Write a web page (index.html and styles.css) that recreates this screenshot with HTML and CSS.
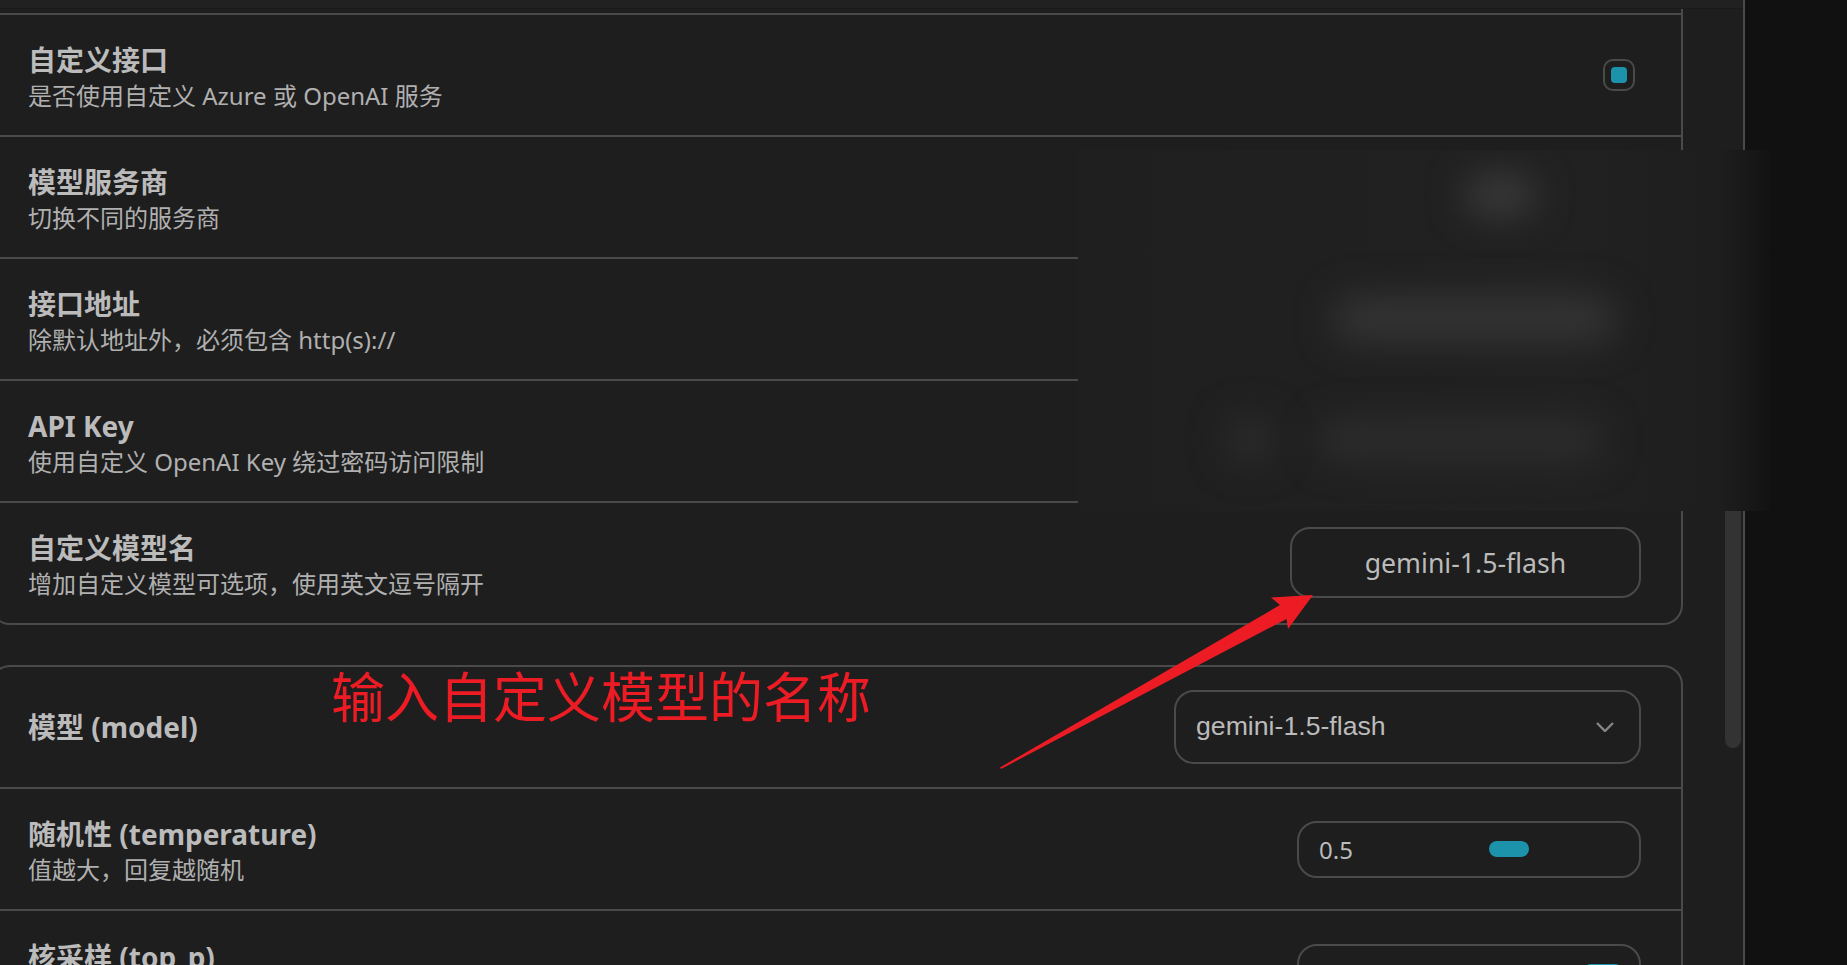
FILE: index.html
```html
<!DOCTYPE html>
<html lang="zh-CN">
<head>
<meta charset="utf-8">
<title>设置</title>
<link rel="stylesheet" href="styles.css">
</head>
<body>
<div class="panel">
  <div class="topbar"></div>
  <div class="scroller">
    <section class="card card--scrolled">
      <div class="row row--clipped"></div>
      <div class="row">
        <div class="label"><div class="title">自定义接口</div><div class="sub">是否使用自定义 Azure 或 OpenAI 服务</div></div>
        <div class="checkbox"><span class="checkbox-mark"></span></div>
      </div>
      <div class="row">
        <div class="label"><div class="title">模型服务商</div><div class="sub">切换不同的服务商</div></div>
      </div>
      <div class="row">
        <div class="label"><div class="title">接口地址</div><div class="sub">除默认地址外，必须包含 http(s)://</div></div>
      </div>
      <div class="row">
        <div class="label"><div class="title">API Key</div><div class="sub">使用自定义 OpenAI Key 绕过密码访问限制</div></div>
      </div>
      <div class="row row--last">
        <div class="label"><div class="title">自定义模型名</div><div class="sub">增加自定义模型可选项，使用英文逗号隔开</div></div>
        <div class="text-input">gemini-1.5-flash</div>
      </div>
    </section>
    <section class="card">
      <div class="row">
        <div class="label label--single"><div class="title">模型 (model)</div></div>
        <div class="select">
          <span>gemini-1.5-flash</span>
          <svg class="chevron" viewBox="0 0 18 10" width="18" height="10"><path d="M1 1l8 8 8-8" fill="none" stroke="#858585" stroke-width="2.4"/></svg>
        </div>
      </div>
      <div class="row">
        <div class="label"><div class="title">随机性 (temperature)</div><div class="sub">值越大，回复越随机</div></div>
        <div class="range"><span class="range-value">0.5</span><span class="range-track"><span class="range-thumb range-thumb--mid"></span></span></div>
      </div>
      <div class="row">
        <div class="label"><div class="title">核采样 (top_p)</div><div class="sub">与随机性类似，但不要和随机性一起更改</div></div>
        <div class="range"><span class="range-value">1.0</span><span class="range-track"><span class="range-thumb range-thumb--max"></span></span></div>
      </div>
    </section>
  </div>
  <div class="scrollbar-thumb"></div>
</div>

<div class="redaction">
  <span class="smudge smudge--a"></span>
  <span class="smudge smudge--b"></span>
  <span class="smudge smudge--c"></span>
  <span class="smudge smudge--d"></span>
</div>

<div class="annotation-text">输入自定义模型的名称</div>
<svg class="annotation-arrow" viewBox="0 0 1847 965" width="1847" height="965">
  <path d="M1000 767.5 L1280 605 L1271 597.5 L1313 595 L1288 629 L1286.5 619 L1001 769 Z" fill="#ed1c24"/>
</svg>
</body>
</html>
```
FILE: styles.css
```css
* { box-sizing: border-box; }

html, body {
  margin: 0;
  height: 100%;
}

body {
  position: relative;
  overflow: hidden;
  background: #111111;
  color: #bbbbbb;
  font-family: "Noto Sans", "Noto Sans CJK SC", sans-serif;
}

.panel {
  position: relative;
  width: 1745px;
  height: 965px;
  overflow: hidden;
  background: #1e1e1e;
  border-right: 2px solid #4a4a4a;
}

.topbar {
  height: 9px;
  background: #212121;
  border-bottom: 1px solid #1a1a1a;
}

.scroller {
  margin-left: -10px;
  padding-right: 60px;
  display: flex;
  flex-direction: column;
  gap: 40px;
}

.card {
  border: 2px solid #4a4a4a;
  border-radius: 20px;
}

.card--scrolled {
  border-top: 0;
  border-top-left-radius: 0;
  border-top-right-radius: 0;
}

.row {
  height: 122px;
  padding: 0 40px 0 36px;
  display: flex;
  align-items: center;
  justify-content: space-between;
  border-bottom: 2px solid #4a4a4a;
}

.row--clipped {
  height: 6px;
}

.row--last {
  height: 120px;
  border-bottom: 0;
}

.card > .row:last-child {
  border-bottom: 0;
}

.label {
  display: flex;
  flex-direction: column;
  padding-top: 3px;
}

.label--single {
  padding-top: 0;
}

.title {
  font-size: 28px;
  font-weight: 700;
  line-height: 38px;
}

.sub {
  font-size: 24px;
  line-height: 33px;
  color: #b0b0b0;
}

.checkbox {
  width: 32px;
  height: 32px;
  margin-right: 6px;
  border: 2px solid #4a4a4a;
  border-radius: 10px;
  display: flex;
  align-items: center;
  justify-content: center;
}

.checkbox-mark {
  width: 16px;
  height: 16px;
  border-radius: 4px;
  background: #1d93ab;
}

.text-input {
  width: 351px;
  height: 71px;
  margin-bottom: 2px;
  border: 2px solid #4a4a4a;
  border-radius: 20px;
  font-size: 26.67px;
  display: flex;
  align-items: center;
  justify-content: center;
}

.select {
  width: 467px;
  height: 74px;
  margin-bottom: 1px;
  padding: 0 20px;
  border: 2px solid #4a4a4a;
  border-radius: 20px;
  font-family: "Liberation Sans", Arial, sans-serif;
  font-size: 26.67px;
  display: flex;
  align-items: center;
  justify-content: space-between;
}

.chevron {
  margin-right: 5px;
}

.range {
  width: 344px;
  height: 57px;
  padding: 0 16px 0 20px;
  border: 2px solid #4a4a4a;
  border-radius: 20px;
  font-size: 24px;
  display: flex;
  align-items: center;
  gap: 20px;
}

.range-track {
  flex: 1;
  display: flex;
}

.range-thumb {
  width: 40px;
  height: 16px;
  border-radius: 8px;
  background: #1d93ab;
}

.range-thumb--mid {
  margin-left: 54.3%;
  transform: translateX(-50%);
}

.range-thumb--max {
  margin-left: auto;
}

.scrollbar-thumb {
  position: absolute;
  top: 480px;
  left: 1725px;
  width: 16px;
  height: 268px;
  border-radius: 8px;
  background: #333333;
}

.redaction {
  position: absolute;
  left: 1078px;
  top: 150px;
  width: 692px;
  height: 361px;
  overflow: hidden;
  background: linear-gradient(90deg, #1f1f1f 0, #212121 70%, #1e1e1e 92%, #181818 97%, #121212 100%);
}

.smudge {
  position: absolute;
  display: block;
  border-radius: 40px;
  filter: blur(18px);
}

.smudge--a {
  left: 386px;
  top: 24px;
  width: 72px;
  height: 42px;
  background: #3a3a3a;
}

.smudge--b {
  left: 254px;
  top: 146px;
  width: 284px;
  height: 46px;
  background: #343434;
}

.smudge--c {
  left: 240px;
  top: 270px;
  width: 285px;
  height: 40px;
  background: #2d2d2d;
}

.smudge--d {
  left: 148px;
  top: 266px;
  width: 48px;
  height: 48px;
  background: #2c2c2c;
}

.annotation-text {
  position: absolute;
  left: 331px;
  top: 659px;
  font-family: "Noto Sans CJK SC", sans-serif;
  font-size: 54px;
  font-weight: 400;
  line-height: 72px;
  color: #ed1c24;
  white-space: nowrap;
}

.annotation-arrow {
  position: absolute;
  left: 0;
  top: 0;
  pointer-events: none;
}
```
